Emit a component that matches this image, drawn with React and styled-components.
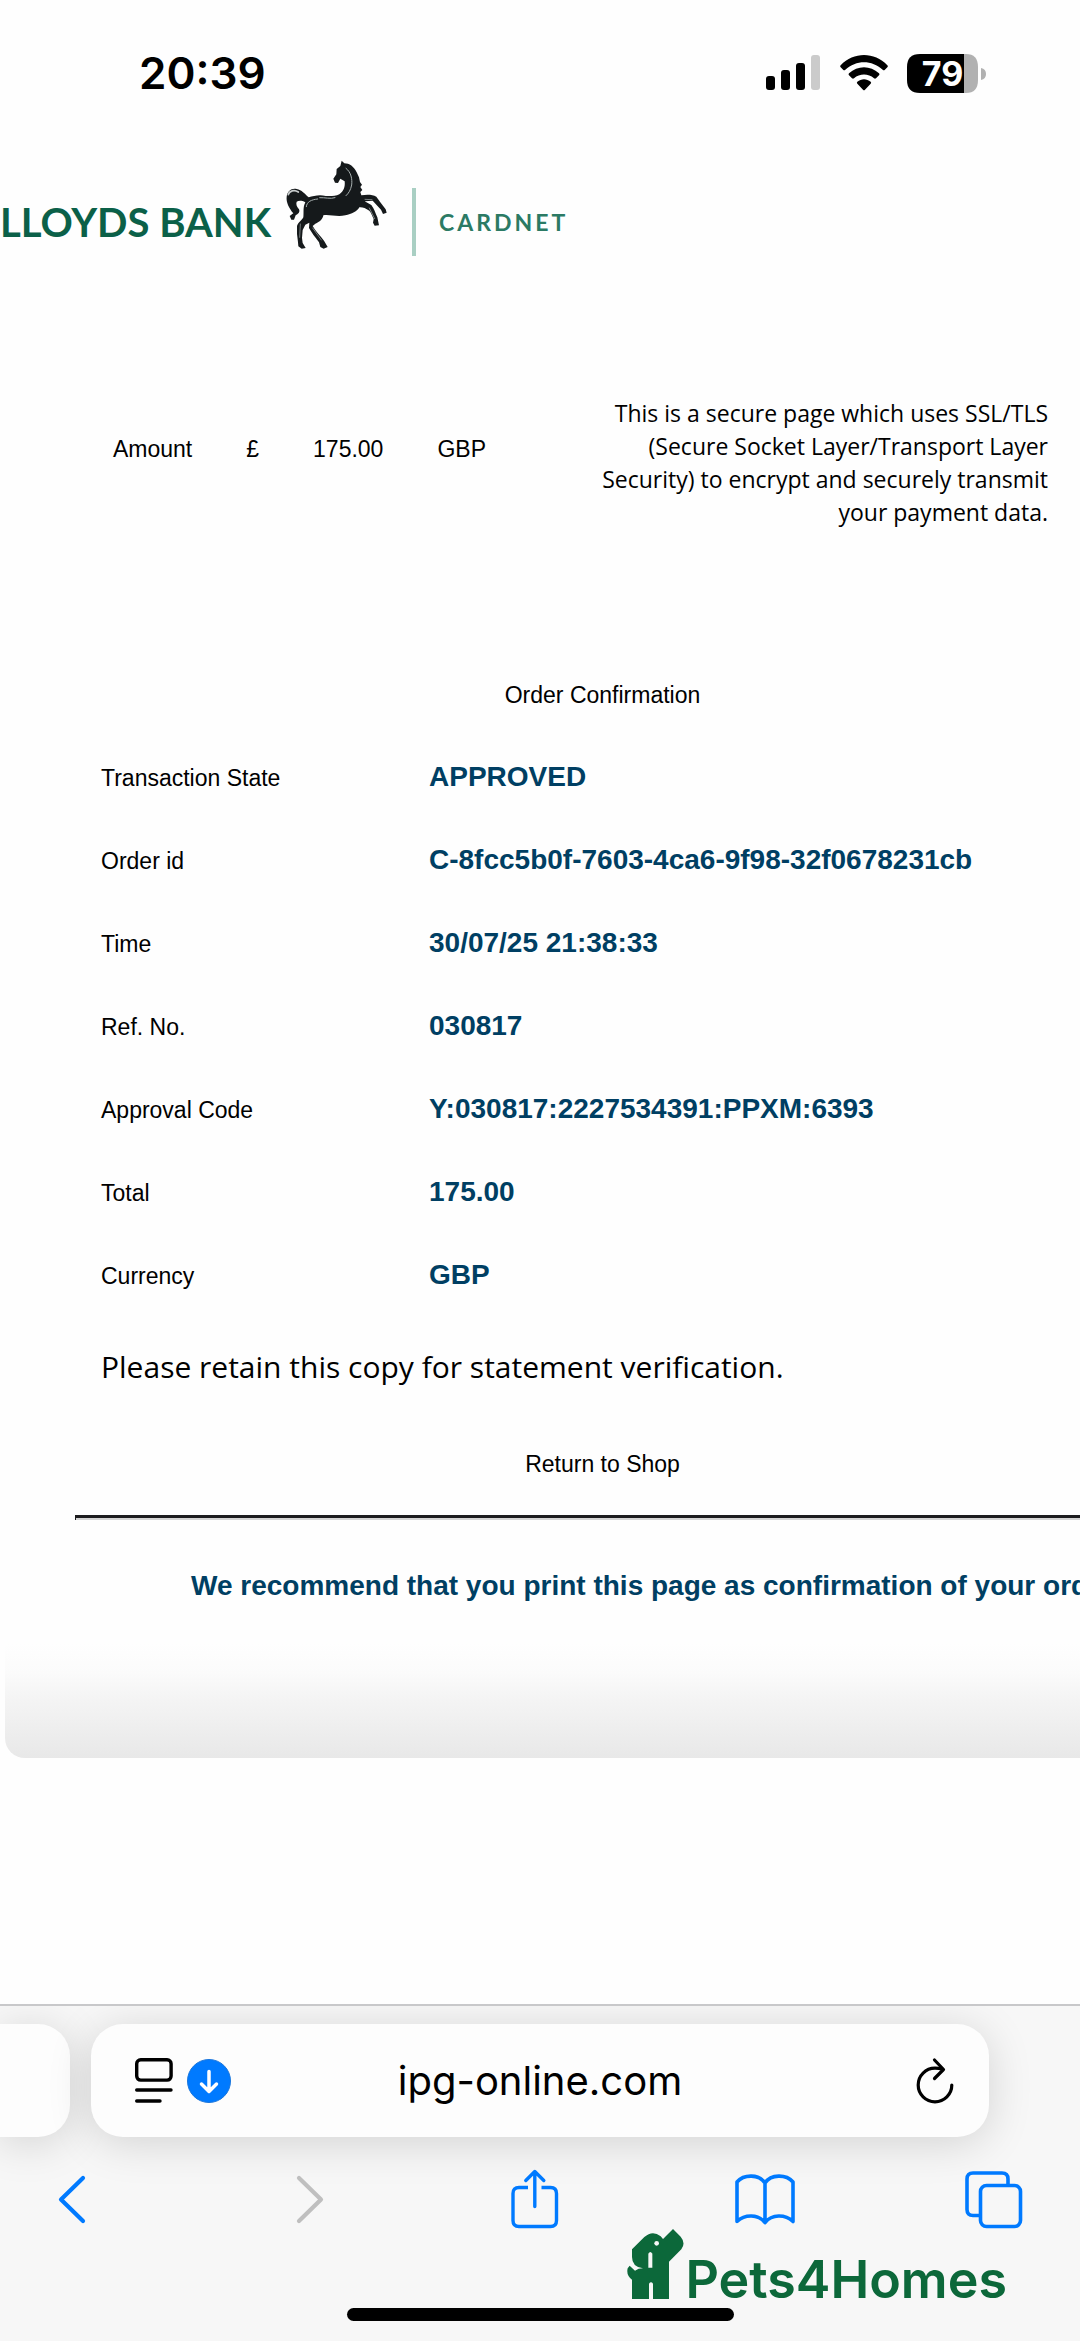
import styled, { createGlobalStyle } from "styled-components";

const GlobalStyle = createGlobalStyle`
  * {
    box-sizing: border-box;
  }
  body {
    margin: 0;
    background: #fefefe;
    color: #000000;
    font-family: "Liberation Sans", Arial, sans-serif;
  }
`;

const Screen = styled.div`
  position: relative;
  display: flex;
  flex-direction: column;
  min-height: 100vh;
  overflow: hidden;
`;

// STATUS BAR
const StatusBar = styled.header`
  display: flex;
  justify-content: space-between;
  align-items: center;
  height: 96px;
  padding: 50px 94px 0 139px;
`;
const Clock = styled.span`
  font-family: Inter, sans-serif;
  font-size: 44px;
  font-weight: 600;
  line-height: 48px;
`;
const StatusIcons = styled.div`
  display: flex;
  align-items: center;
  gap: 19px;
`;
const Battery = styled.div`
  position: relative;
  width: 79px;
  height: 39px;
`;
const BatteryLevel = styled.span`
  position: absolute;
  inset: 0 8px 0 0;
  color: #ffffff;
  font-family: Inter, sans-serif;
  font-size: 34px;
  font-weight: 700;
  line-height: 39px;
  text-align: center;
`;

// PAGE
const Page = styled.main`
  flex: 1;
`;
const Brand = styled.div`
  display: flex;
  align-items: center;
  height: 110px;
  margin-top: 54px;
`;
const BrandName = styled.span`
  width: 280px;
  padding-top: 34px;
  color: #0b6048;
  font-family: Lato, sans-serif;
  font-size: 40px;
  font-weight: 700;
  line-height: 40px;
  white-space: nowrap;
`;
const BrandRule = styled.span`
  width: 4px;
  height: 68px;
  margin: 34px 23px 0 20px;
  background: #a9cfc3;
`;
const BrandUnit = styled.span`
  padding-top: 34px;
  color: #2b7a64;
  font-family: Lato, sans-serif;
  font-size: 23px;
  font-weight: 700;
  line-height: 30px;
  letter-spacing: 3px;
`;
const Panel = styled.section`
  width: calc(100% + 115px);
  margin: -90px 0 0 5px;
  padding: 227px 70px 155px 70px;
  border-radius: 20px;
  background: linear-gradient(to top, #e8e8e8 0, #f4f4f4 58px, #fbfbfb 85px, #fefefe 115px);
`;
const Summary = styled.div`
  display: flex;
  justify-content: space-between;
  align-items: flex-start;
  padding: 0 82px 0 38px;
`;
const Amounts = styled.div`
  display: flex;
  gap: 54px;
  padding-top: 38px;
  font-size: 23px;
  line-height: 28px;
`;
const SecureNote = styled.p`
  width: 455px;
  margin: 0;
  font-family: "Open Sans", sans-serif;
  font-size: 23px;
  line-height: 33px;
  text-align: right;
`;
const Title = styled.h1`
  margin: 152px 0 26px;
  font-size: 23px;
  font-weight: 400;
  line-height: 28px;
  text-align: center;
`;
const Details = styled.table`
  width: 100%;
  border-collapse: collapse;

  th,
  td {
    height: 83px;
    padding: 0;
    text-align: left;
    vertical-align: baseline;
  }
  th {
    width: 354px;
    padding-left: 26px;
    font-size: 23px;
    font-weight: 400;
  }
  td {
    color: #003f63;
    font-size: 28px;
    font-weight: 700;
    line-height: 83px;
  }
`;
const Retain = styled.p`
  margin: 30px 0 62px 26px;
  font-family: "Open Sans", sans-serif;
  font-size: 30px;
  line-height: 42px;
`;
const ShopLink = styled.a`
  display: block;
  color: #000000;
  font-size: 23px;
  line-height: 28px;
  text-align: center;
  text-decoration: none;
`;
const Divider = styled.hr`
  height: 5px;
  margin: 37px 0 49px;
  border: 0;
  border-top: 3px solid #1c1c1e;
  border-left: 1px solid #1c1c1e;
  background: #d4d4d4;
`;
const Advice = styled.p`
  margin: 0 0 0 116px;
  color: #003f63;
  font-size: 28px;
  font-weight: 700;
  line-height: 34px;
  white-space: nowrap;
`;

// BROWSER BAR
const BrowserBar = styled.footer`
  position: relative;
  height: 337px;
  border-top: 2px solid #c8c8ca;
  background: #f7f7f7;
  overflow: hidden;
`;
const Tabs = styled.div`
  display: flex;
  gap: 21px;
  padding: 18px 91px 0 0;
`;
const PreviousTab = styled.div`
  flex: none;
  width: 70px;
  height: 113px;
  border-radius: 0 32px 32px 0;
  background: #fdfdfd;
  box-shadow: 0 6px 44px rgba(0, 0, 0, 0.15);
`;
const AddressBar = styled.div`
  display: flex;
  flex: 1;
  align-items: center;
  gap: 14px;
  min-width: 0;
  height: 113px;
  padding: 0 32px 0 44px;
  border-radius: 32px;
  background: #fdfdfd;
  box-shadow: 0 6px 44px rgba(0, 0, 0, 0.15);
`;
const IconButton = styled.button`
  display: flex;
  justify-content: center;
  padding: 0;
  border: 0;
  background: none;
  color: ${(props) => props.$color || "#007aff"};
`;
const Address = styled.input`
  flex: 1;
  min-width: 0;
  margin-right: 64px;
  padding: 0;
  border: 0;
  outline: 0;
  background: none;
  color: #000000;
  font-family: Inter, sans-serif;
  font-size: 40px;
  line-height: 50px;
  text-align: center;
`;
const Toolbar = styled.nav`
  display: flex;
  justify-content: space-between;
  align-items: center;
  padding: 32px 56px 0 46px;
`;
const ToolButton = styled(IconButton)`
  width: 60px;
`;
const HomeIndicator = styled.div`
  width: 387px;
  height: 13px;
  margin: 79px auto 0;
  border-radius: 7px;
  background: #000000;
`;
const Watermark = styled.div`
  position: absolute;
  right: 73px;
  bottom: 42px;
  display: flex;
  align-items: flex-end;
  gap: 1px;
  color: #0c683a;
`;
const WatermarkName = styled.span`
  height: 52px;
  font-family: Inter, sans-serif;
  font-size: 52px;
  font-weight: 600;
  line-height: 66px;
`;

const SignalIcon = () => (
  <svg width="55" height="36" viewBox="0 0 55 36">
    <rect x="0" y="21" width="9" height="14" rx="3" />
    <rect x="15" y="15" width="9" height="20" rx="3" />
    <rect x="30" y="8" width="9" height="27" rx="3" />
    <rect x="45" y="0" width="9" height="35" rx="3" fill="#cbcbcb" />
  </svg>
);

const WifiIcon = () => (
  <svg width="48" height="36" viewBox="0 0 144 108">
    <path d="M2 31 C41 -10 103 -10 142 31 Q145 34 142 37 L134 45 Q131 47 128 44 C96 14 48 14 16 44 Q13 47 10 45 L2 37 Q-1 34 2 31Z" />
    <path d="M27 55 C53 31 91 31 117 55 Q120 58 117 61 L108 70 Q105 72 102 70 C85 55 59 55 42 70 Q39 72 36 70 L27 61 Q24 58 27 55Z" />
    <path d="M52 80 C64 70 80 70 92 80 Q95 83 92 86 L75 104 Q72 107 69 104 L52 86 Q49 83 52 80Z" />
  </svg>
);

const BatteryIcon = () => (
  <svg width="79" height="39" viewBox="0 0 79 39">
    <path d="M57 0H59Q71 0 71 13V26Q71 39 59 39H57Z" fill="#b1b1b1" />
    <path d="M13 0H57V39H13Q0 39 0 26V13Q0 0 13 0Z" />
    <path d="M74 14Q79 15 79 20T74 26Z" fill="#b1b1b1" />
  </svg>
);

const HorseIcon = () => (
  <svg width="112" height="102" viewBox="0 0 336 306">
    <g fill="#15191b">
      <path d="M185 20 L193 28 C208 28 222 38 230 55 L237 70 L240 84 L246 92 L241 99 L247 108 L241 114 L244 124 C262 121 278 122 289 128 C298 140 307 153 317 166 L320 176 L309 180 L303 167 L278 140 L254 142 L274 153 C283 164 286 178 292 190 L297 214 L284 215 L279 206 L281 195 C276 183 273 176 268 170 C256 162 247 159 238 160 C232 172 215 180 196 184 C172 190 150 181 130 184 C129 195 119 204 106 209 L98 216 C107 232 122 247 132 260 L143 279 L131 284 L121 279 L117 265 C106 250 94 235 87 222 L88 206 L76 212 L68 228 L66 252 L68 267 L77 282 L65 284 L55 277 L54 265 L51 240 L51 216 C54 205 65 200 70 190 C72 175 68 160 76 145 C65 139 56 140 50 143 C47 151 51 159 57 166 C61 174 54 181 47 184 L42 197 L34 197 L29 186 L40 178 C27 162 18 145 20 128 C22 111 35 101 50 105 C66 108 73 119 86 130 C101 125 120 121 137 126 C152 126 166 127 178 121 C191 112 196 99 194 82 L181 74 L174 87 L165 86 L160 74 L169 61 L170 45 L181 36Z" />
    </g>
    <g fill="none" stroke="#a7b0b0" strokeWidth="3" strokeLinecap="round">
      <path d="M198 43 C214 55 217 76 215 93 C212 108 206 118 198 125" />
      <path d="M79 158 C80 143 94 137 113 135 M119 131 C136 130 151 136 165 131" />
      <path d="M25 122 C28 110 43 106 55 114" stroke="#c7cccc" strokeWidth="5" />
      <path d="M61 210 L59 250 M98 222 L124 258 M255 136 L276 137 M268 162 L284 194" strokeWidth="2" />
    </g>
  </svg>
);

const ReaderIcon = () => (
  <svg width="38" height="46" viewBox="0 0 38 46" fill="none" stroke="#000000" strokeWidth="3.4" strokeLinecap="round">
    <rect x="1.7" y="1.7" width="34.4" height="20.4" rx="4" />
    <path d="M1.7 32H36M1.7 43H25" />
  </svg>
);

const DownloadIcon = () => (
  <svg width="44" height="44" viewBox="0 0 44 44" fill="none">
    <circle cx="22" cy="22" r="21.5" fill="#007aff" stroke="#1a76dc" />
    <path d="M22 12.5V32M14.5 25L22 32.5L29.5 25" stroke="#ffffff" strokeWidth="3.5" strokeLinecap="round" strokeLinejoin="round" />
  </svg>
);

const ReloadIcon = () => (
  <svg width="44" height="48" viewBox="0 0 44 48" fill="none" stroke="#000000" strokeWidth="3.2" strokeLinecap="round" strokeLinejoin="round">
    <path d="M29.5 12.3C27 11.5 25 11.2 22 11.2A16.8 16.8 0 1 0 38.8 28" />
    <path d="M21.5 3L30.5 12.5L21.5 21.5" />
  </svg>
);

const ChevronIcon = ({ flip }) => (
  <svg width="40" height="60" viewBox="0 0 40 60" fill="none" stroke="currentColor" strokeWidth="4.2" strokeLinecap="round" strokeLinejoin="round">
    <path d={flip ? "M13 9L35 30.5L13 52" : "M27 9L5 30.5L27 52"} />
  </svg>
);

const ShareIcon = () => (
  <svg width="48" height="60" viewBox="0 0 48 60" fill="none" stroke="currentColor" strokeWidth="3.4" strokeLinecap="round" strokeLinejoin="round">
    <path d="M17 18.5H8Q2 18.5 2 24.5V51.5Q2 57.5 8 57.5H39.5Q45.5 57.5 45.5 51.5V24.5Q45.5 18.5 39.5 18.5H30.5" strokeLinecap="butt" />
    <path d="M23.8 37.5V2.5M14.8 11.5L23.8 2.5L32.8 11.5" />
  </svg>
);

const BookIcon = () => (
  <svg width="60" height="60" viewBox="0 0 60 60" fill="none" stroke="currentColor" strokeWidth="3.6" strokeLinecap="round" strokeLinejoin="round">
    <path d="M30 14C24 5 9 5 2 13V52.5C10 45 23 45 30 53.5C37 45 50 45 58 52.5V13C51 5 36 5 30 14V53" />
  </svg>
);

const TabsIcon = () => (
  <svg width="58" height="60" viewBox="0 0 58 60" fill="none" stroke="currentColor" strokeWidth="3.6">
    <path d="M14 46.5H8Q2 46.5 2 40.5V10Q2 4 8 4H37Q43 4 43 10V16" />
    <rect x="15.5" y="16.5" width="40" height="41" rx="6" />
  </svg>
);

const DogIcon = () => (
  <svg width="57" height="70" viewBox="0 0 171 210">
    <path
      fill="currentColor"
      d="M138 0L161 23Q177 42 163 61L126 98V210H78V164Q72 156 66 164V210H15V152Q-3 138 2 118L8 110L24 125Q34 118 48 118Q15 114 15 84V61L52 24Q77 2 101 22L108 30Z"
    />
    <path fill="#f7f7f7" d="M64 116V74Q70 64 76 74V116Z" />
    <circle cx="89" cy="43" r="7" fill="#f7f7f7" />
  </svg>
);

const details = [
  ["Transaction State", "APPROVED"],
  ["Order id", "C-8fcc5b0f-7603-4ca6-9f98-32f0678231cb"],
  ["Time", "30/07/25 21:38:33"],
  ["Ref. No.", "030817"],
  ["Approval Code", "Y:030817:2227534391:PPXM:6393"],
  ["Total", "175.00"],
  ["Currency", "GBP"],
];

const App = () => {
  return (
    <Screen>
      <GlobalStyle />
      <StatusBar>
        <Clock>20:39</Clock>
        <StatusIcons>
          <SignalIcon />
          <WifiIcon />
          <Battery>
            <BatteryIcon />
            <BatteryLevel>79</BatteryLevel>
          </Battery>
        </StatusIcons>
      </StatusBar>
      <Page>
        <Brand>
          <BrandName>LLOYDS BANK</BrandName>
          <HorseIcon />
          <BrandRule />
          <BrandUnit>CARDNET</BrandUnit>
        </Brand>
        <Panel>
          <Summary>
            <Amounts>
              <span>Amount</span>
              <span>£</span>
              <span>175.00</span>
              <span>GBP</span>
            </Amounts>
            <SecureNote>
              This is a secure page which uses SSL/TLS (Secure Socket
              Layer/Transport Layer Security) to encrypt and securely transmit
              your payment data.
            </SecureNote>
          </Summary>
          <Title>Order Confirmation</Title>
          <Details>
            <tbody>
              {details.map(([label, value]) => (
                <tr key={label}>
                  <th scope="row">{label}</th>
                  <td>{value}</td>
                </tr>
              ))}
            </tbody>
          </Details>
          <Retain>Please retain this copy for statement verification.</Retain>
          <ShopLink href="#shop">Return to Shop</ShopLink>
          <Divider />
          <Advice>
            We recommend that you print this page as confirmation of your order.
          </Advice>
        </Panel>
      </Page>
      <BrowserBar>
        <Tabs>
          <PreviousTab />
          <AddressBar>
            <IconButton aria-label="Page menu">
              <ReaderIcon />
            </IconButton>
            <IconButton aria-label="Downloads">
              <DownloadIcon />
            </IconButton>
            <Address aria-label="Address" defaultValue="ipg-online.com" />
            <IconButton aria-label="Reload">
              <ReloadIcon />
            </IconButton>
          </AddressBar>
        </Tabs>
        <Toolbar>
          <ToolButton aria-label="Back">
            <ChevronIcon />
          </ToolButton>
          <ToolButton aria-label="Forward" $color="#bfbfbf">
            <ChevronIcon flip />
          </ToolButton>
          <ToolButton aria-label="Share">
            <ShareIcon />
          </ToolButton>
          <ToolButton aria-label="Bookmarks">
            <BookIcon />
          </ToolButton>
          <ToolButton aria-label="Tabs">
            <TabsIcon />
          </ToolButton>
        </Toolbar>
        <HomeIndicator />
        <Watermark>
          <DogIcon />
          <WatermarkName>Pets4Homes</WatermarkName>
        </Watermark>
      </BrowserBar>
    </Screen>
  );
};

export default App;
